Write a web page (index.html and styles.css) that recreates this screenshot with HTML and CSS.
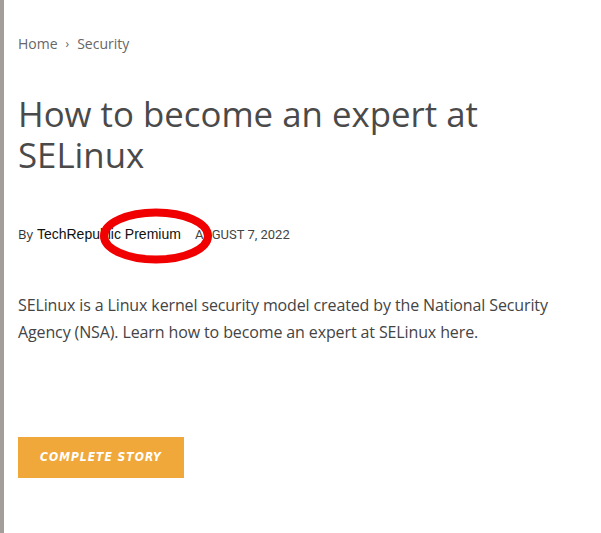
FILE: index.html
```html
<!DOCTYPE html>
<html lang="en">
<head>
    <meta charset="UTF-8">
    <meta name="viewport" content="width=device-width, initial-scale=1.0">
    <title>How to become an expert at SELinux</title>
    <link rel="stylesheet" href="styles.css">
</head>
<body>
    <div class="page">
        <nav class="breadcrumb">
            <a href="#">Home</a>
            <span class="sep">›</span>
            <a href="#">Security</a>
        </nav>

        <h1 class="title">How to become an expert at SELinux</h1>

        <div class="meta">
            <span class="by">By</span>
            <span class="author">TechRepublic Premium</span>
            <span class="date">August 7, 2022</span>
            <svg class="mark" width="116" height="60" viewBox="0 0 116 60">
                <ellipse cx="58" cy="30" rx="52" ry="23.5" fill="none" stroke="#f00000" stroke-width="8"/>
            </svg>
        </div>

        <p class="summary">SELinux is a Linux kernel security model created by the National Security Agency (NSA). Learn how to become an expert at SELinux here.</p>

        <a class="story-btn" href="#">Complete Story</a>
    </div>
</body>
</html>
```
FILE: styles.css
```css
body {
    margin: 0;
    background: #fff;
    font-family: 'Open Sans', sans-serif;
    border-left: 4px solid #a39e99;
    min-height: 533px;
    box-sizing: border-box;
}

.page {
    padding: 34px 14px 0 14px;
}

.breadcrumb {
    font-size: 14px;
    color: #666;
    display: flex;
    gap: 8px;
    align-items: center;
}

.breadcrumb a {
    color: #666;
    text-decoration: none;
}

.breadcrumb .sep {
    font-size: 12px;
}

.title {
    font-size: 34.8px;
    font-weight: 400;
    line-height: 41px;
    color: #4a4a4a;
    margin: 40px 0 0 0;
}

.meta {
    position: relative;
    margin-top: 50px;
    display: flex;
    align-items: baseline;
    font-size: 13px;
}

.by {
    color: #333;
    margin-right: 4px;
}

.author {
    font-family: 'Liberation Sans', Arial, sans-serif;
    font-size: 14px;
    color: #111;
}

.date {
    font-family: Roboto, sans-serif;
    text-transform: uppercase;
    color: #444;
    margin-left: 14px;
}

.mark {
    position: absolute;
    left: 80px;
    top: -19px;
}

.summary {
    font-size: 16px;
    line-height: 27px;
    letter-spacing: -0.12px;
    color: #444;
    margin: 49px 0 0 0;
}

.story-btn {
    display: inline-block;
    margin-top: 91px;
    width: 166px;
    height: 41px;
    line-height: 41px;
    text-align: center;
    background: #f0a83a;
    color: #fff;
    text-decoration: none;
    text-transform: uppercase;
    font-family: 'DejaVu Sans Condensed', sans-serif;
    font-weight: bold;
    font-style: italic;
    font-size: 12px;
    letter-spacing: 1px;
}
```
